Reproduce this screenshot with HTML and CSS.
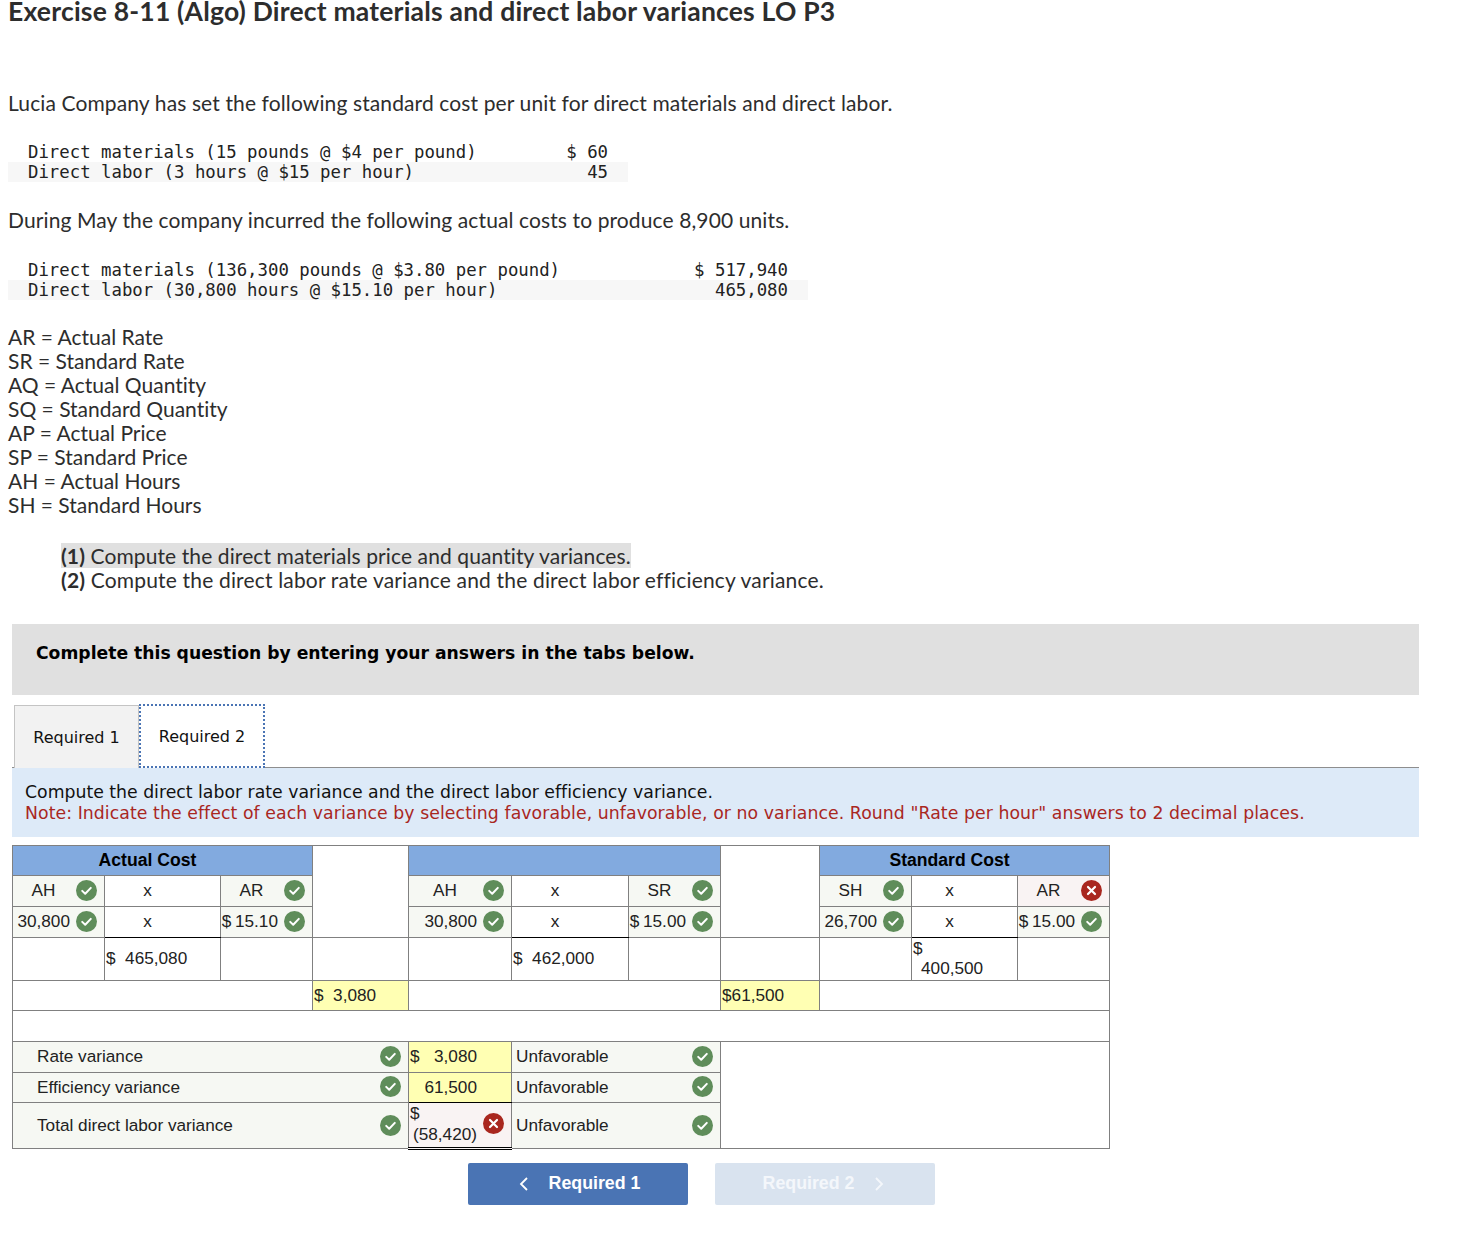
FILE: index.html
```html
<!DOCTYPE html>
<html lang="en">
<head>
<meta charset="utf-8">
<title>Exercise 8-11</title>
<link rel="stylesheet" href="styles.css">
</head>
<body>
<svg class="defs" width="0" height="0" aria-hidden="true">
  <symbol id="ok" viewBox="0 0 21 21"><circle cx="10.5" cy="10.5" r="10.5" fill="#5f8d5a"/><path d="M6.2 10.9l3 2.9 5.6-5.9" fill="none" stroke="#fff" stroke-width="2" stroke-linecap="round" stroke-linejoin="round"/></symbol>
  <symbol id="bad" viewBox="0 0 21 21"><circle cx="10.5" cy="10.5" r="10.5" fill="#a9271f"/><path d="M7 7l7 7M14 7l-7 7" fill="none" stroke="#fff" stroke-width="2.2" stroke-linecap="round"/></symbol>
</svg>
<main class="page">
  <h1 class="title">Exercise 8-11 (Algo) Direct materials and direct labor variances LO P3</h1>
  <p class="intro">Lucia Company has set the following standard cost per unit for direct materials and direct labor.</p>
  <div class="mono mono-a">
    <div class="mono-row"><span>Direct materials (15 pounds @ $4 per pound)</span><span>$ 60</span></div>
    <div class="mono-row alt"><span>Direct labor (3 hours @ $15 per hour)</span><span>  45</span></div>
  </div>
  <p class="during">During May the company incurred the following actual costs to produce 8,900 units.</p>
  <div class="mono mono-b">
    <div class="mono-row"><span>Direct materials (136,300 pounds @ $3.80 per pound)</span><span>$ 517,940</span></div>
    <div class="mono-row alt"><span>Direct labor (30,800 hours @ $15.10 per hour)</span><span>  465,080</span></div>
  </div>
  <div class="legend">
    <div>AR = Actual Rate</div>
    <div>SR = Standard Rate</div>
    <div>AQ = Actual Quantity</div>
    <div>SQ = Standard Quantity</div>
    <div>AP = Actual Price</div>
    <div>SP = Standard Price</div>
    <div>AH = Actual Hours</div>
    <div>SH = Standard Hours</div>
  </div>
  <div class="tasks">
    <div><span class="hl"><b>(1)</b> Compute the direct materials price and quantity variances.</span></div>
    <div><b>(2)</b> Compute the direct labor rate variance and the direct labor efficiency variance.</div>
  </div>
  <section class="work">
    <div class="banner">Complete this question by entering your answers in the tabs below.</div>
    <div class="tabs">
      <div class="tab">Required 1</div>
      <div class="tab active">Required 2</div>
    </div>
    <div class="panel">
      <div>Compute the direct labor rate variance and the direct labor efficiency variance.</div>
      <div class="note">Note: Indicate the effect of each variance by selecting favorable, unfavorable, or no variance. Round "Rate per hour" answers to 2 decimal places.</div>
    </div>
    <table class="grid">
      <colgroup>
        <col class="c92"><col class="c116"><col class="c92"><col class="c96"><col class="c103"><col class="c117"><col class="c92"><col class="c99"><col class="c92"><col class="c106"><col class="c92">
      </colgroup>
      <tr class="r30">
        <th colspan="3">Actual Cost</th>
        <td rowspan="3"></td>
        <th colspan="3"></th>
        <td rowspan="3"></td>
        <th colspan="3">Standard Cost</th>
      </tr>
      <tr class="r31">
        <td class="good"><div class="f"><span class="c">AH</span><svg class="ic"><use href="#ok"/></svg></div></td>
        <td><div class="x">x</div></td>
        <td class="good"><div class="f"><span class="c">AR</span><svg class="ic"><use href="#ok"/></svg></div></td>
        <td class="good"><div class="f"><span class="c">AH</span><svg class="ic"><use href="#ok"/></svg></div></td>
        <td><div class="x">x</div></td>
        <td class="good"><div class="f"><span class="c">SR</span><svg class="ic"><use href="#ok"/></svg></div></td>
        <td class="good"><div class="f"><span class="c">SH</span><svg class="ic"><use href="#ok"/></svg></div></td>
        <td><div class="x">x</div></td>
        <td class="bad"><div class="f"><span class="c">AR</span><svg class="ic"><use href="#bad"/></svg></div></td>
      </tr>
      <tr class="r31">
        <td class="good"><div class="f"><span class="r">30,800</span><svg class="ic"><use href="#ok"/></svg></div></td>
        <td class="under"><div class="x">x</div></td>
        <td class="good"><div class="f"><span class="r">$ 15.10</span><svg class="ic"><use href="#ok"/></svg></div></td>
        <td class="good"><div class="f"><span class="r">30,800</span><svg class="ic"><use href="#ok"/></svg></div></td>
        <td class="under"><div class="x">x</div></td>
        <td class="good"><div class="f"><span class="r">$ 15.00</span><svg class="ic"><use href="#ok"/></svg></div></td>
        <td class="good"><div class="f"><span class="r">26,700</span><svg class="ic"><use href="#ok"/></svg></div></td>
        <td class="under"><div class="x">x</div></td>
        <td class="good"><div class="f"><span class="r">$ 15.00</span><svg class="ic"><use href="#ok"/></svg></div></td>
      </tr>
      <tr class="r43">
        <td></td>
        <td><div class="amt">$&nbsp; 465,080</div></td>
        <td></td>
        <td></td>
        <td></td>
        <td><div class="amt">$&nbsp; 462,000</div></td>
        <td></td>
        <td></td>
        <td></td>
        <td><div class="amt wrap"><div>$</div><div class="in">400,500</div></div></td>
        <td></td>
      </tr>
      <tr class="r30">
        <td colspan="3"></td>
        <td class="yellow"><div class="amt">$&nbsp; 3,080</div></td>
        <td colspan="3"></td>
        <td class="yellow"><div class="amt">$61,500</div></td>
        <td colspan="3"></td>
      </tr>
      <tr class="r31"><td colspan="11"></td></tr>
      <tr class="r31">
        <td colspan="4" class="good"><div class="f lbl"><span class="g">Rate variance</span><svg class="ic"><use href="#ok"/></svg></div></td>
        <td class="yellow"><div class="money"><span>$</span><span>3,080</span></div></td>
        <td colspan="2" class="good"><div class="f sel"><span class="g">Unfavorable</span><svg class="ic"><use href="#ok"/></svg></div></td>
        <td colspan="4" rowspan="3"></td>
      </tr>
      <tr class="r30">
        <td colspan="4" class="good"><div class="f lbl"><span class="g">Efficiency variance</span><svg class="ic"><use href="#ok"/></svg></div></td>
        <td class="yellow under"><div class="money"><span></span><span>61,500</span></div></td>
        <td colspan="2" class="good"><div class="f sel"><span class="g">Unfavorable</span><svg class="ic"><use href="#ok"/></svg></div></td>
      </tr>
      <tr class="r46">
        <td colspan="4" class="good"><div class="f lbl"><span class="g">Total direct labor variance</span><svg class="ic"><use href="#ok"/></svg></div></td>
        <td class="bad double"><div class="f total"><div class="g"><div>$</div><div class="neg">(58,420)</div></div><svg class="ic"><use href="#bad"/></svg></div></td>
        <td colspan="2" class="good"><div class="f sel"><span class="g">Unfavorable</span><svg class="ic"><use href="#ok"/></svg></div></td>
      </tr>
    </table>
    <nav class="nav">
      <div class="btn prev">
        <svg class="chev" viewBox="0 0 10 16"><path d="M8 2L2 8l6 6" fill="none" stroke="currentColor" stroke-width="1.8"/></svg>
        <span>Required 1</span>
      </div>
      <div class="btn off">
        <span>Required 2</span>
        <svg class="chev" viewBox="0 0 10 16"><path d="M2 2l6 6-6 6" fill="none" stroke="currentColor" stroke-width="1.8"/></svg>
      </div>
    </nav>
  </section>
</main>
</body>
</html>
```
FILE: styles.css
```css
* { box-sizing: border-box; }
html, body { margin: 0; padding: 0; background: #fff; }
body { font-family: "Lato", "Liberation Sans", sans-serif; color: #2d2d2d; font-variant-ligatures: none; }
.defs { position: absolute; }
.page { padding: 0 8px; height: 1256px; overflow: hidden; }
.title { margin: 0; font-size: 26.5px; line-height: 22px; font-weight: 700; letter-spacing: .2px; color: #2d2d2d; }
.intro { margin: 69px 0 0; font-size: 21px; line-height: 24px; letter-spacing: .12px; }
.mono { font-family: "DejaVu Sans Mono", "Liberation Mono", monospace; font-size: 17.33px; line-height: 20px; color: #222; }
.mono-a { margin-top: 27px; width: 620px; }
.mono-b { margin-top: 28px; width: 800px; }
.mono-row { display: flex; justify-content: space-between; padding: 0 20px; }
.mono-row span { white-space: pre; }
.mono-row.alt { background: #f7f7f7; }
.during { margin: 26px 0 0; font-size: 21px; line-height: 24px; letter-spacing: .11px; }
.legend { margin-top: 25px; font-size: 21px; line-height: 24px; }
.tasks { margin: 27px 0 0 53px; font-size: 21px; line-height: 24px; letter-spacing: .17px; }
.hl { background: #e0e0e0; letter-spacing: .1px; }
.work { margin: 32px 0 0 4px; width: 1407px; font-family: "DejaVu Sans", Verdana, sans-serif; color: #000; }
.banner { height: 71px; background: #e0e0e0; padding: 18px 24px 0; font-size: 17.2px; line-height: 22px; font-weight: 700; }
.tabs { display: flex; align-items: flex-end; height: 64px; margin: 9px 0 -1px 2px; position: relative; z-index: 1; font-size: 16px; }
.tab { width: 125px; height: 63px; background: #f2f2f2; border: 1px solid #c4c4c4; border-bottom: 0; display: flex; align-items: center; justify-content: center; color: #111; }
.tab.active { width: 126px; height: 64px; background: #fff; border: 2px dotted #4a74b4; padding-top: 1px; }
.panel { height: 70px; background: #ddeaf8; border-top: 1px solid #8e8e8e; padding: 14px 13px 0; font-size: 17.3px; line-height: 21px; color: #111; }
.note { color: #a9271f; letter-spacing: .07px; }
.grid { margin-top: 8px; width: 1098px; table-layout: fixed; border-collapse: collapse; font-family: "Liberation Sans", Arial, sans-serif; font-size: 17.2px; color: #222; }
.grid td, .grid th { border: 1px solid #808080; padding: 0; }
.grid td { padding-bottom: 2px; }
.grid .r30 td, .grid .r46 td { padding-bottom: 0; }
.grid th { background: #82aadf; font-size: 17.6px; font-weight: 700; color: #000; text-align: center; padding-right: 30px; }
.c92 { width: 92px; } .c116 { width: 116px; } .c96 { width: 96px; } .c103 { width: 103px; } .c117 { width: 117px; } .c99 { width: 99px; } .c106 { width: 106px; }
.r30 { height: 30px; } .r31 { height: 31px; } .r43 { height: 43px; } .r46 { height: 46px; }
.grid td.good { background: #f6f8f3; }
.grid td.bad { background: #f9f3f3; }
.grid td.yellow { background: #ffffb3; }
.grid td.under { border-bottom: 1px solid #000; }
.grid td.double { border-top: 1px solid #000; border-bottom: 3px double #000; }
.f { display: flex; align-items: center; padding: 0 7px 0 0; }
.c { flex: 1; text-align: center; padding-right: 2px; }
.r { flex: 1; min-width: 0; text-align: right; padding-right: 6px; white-space: nowrap; word-spacing: -1px; }
.g { flex: 1; }
.ic { width: 21px; height: 21px; flex: none; display: block; }
.r30 .ic, .total .ic { margin-top: -2px; }
.lbl { padding-left: 24px; }
.sel { padding-left: 4px; }
.x { text-align: center; padding-right: 30px; }
.amt { padding-left: 1px; white-space: nowrap; }
.wrap { line-height: 20px; }
.in { padding-left: 8px; }
.money { display: flex; justify-content: space-between; padding: 0 34px 0 1px; }
.total { padding: 0 7px 2px 1px; line-height: 21px; }
.neg { padding-left: 3px; }
.nav { display: flex; gap: 27px; margin: 13px 0 0 456px; font-family: "Liberation Sans", Arial, sans-serif; font-size: 17.8px; font-weight: 700; }
.btn { width: 220px; height: 42px; border-radius: 2px; background: #4a74b4; color: #fff; display: flex; align-items: center; justify-content: center; gap: 20px; padding-bottom: 1px; }
.btn.prev { padding-left: 3px; }
.btn.off { background: #d9e3ef; color: #f4f7fb; padding-right: 3px; }
.chev { width: 10px; height: 16px; display: block; }
```
